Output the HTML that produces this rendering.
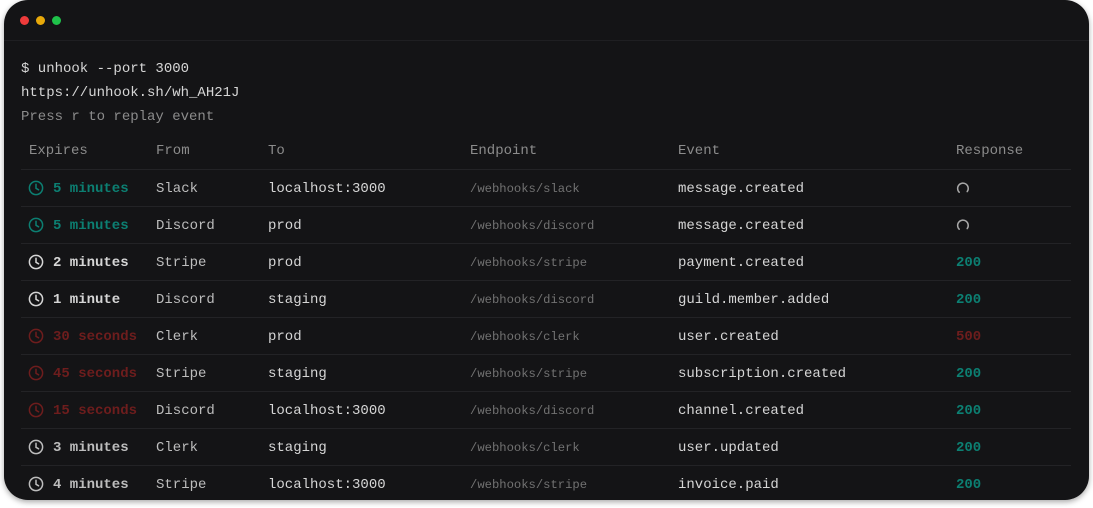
<!DOCTYPE html>
<html><head><style>
body{margin:0;width:1093px;height:508px;background:#fff;overflow:hidden;font-family:"Liberation Mono",monospace;}
.win{position:absolute;left:4px;top:0;width:1085px;height:500px;background:#141416;border-radius:24px;box-shadow:0 2px 6px rgba(0,0,0,.35);overflow:hidden;}
.dot{position:absolute;top:16px;width:9px;height:9px;border-radius:50%;}
.bar{position:absolute;left:0;right:0;top:40px;height:1px;background:#1f1f22;}
.t{position:absolute;font-size:14px;white-space:nowrap;line-height:16px;color:#d2d2d2;}
.ln{position:absolute;left:17px;width:1050px;height:1px;background:#232326;}
.ep{font-size:12.2px;color:#727272;}
.h{color:#8c8c8c;}
.b{font-weight:bold;}
.teal{color:#0c7f72;}
.red{color:#6e1d1d;}
.w{color:#d6d6d6;}
.g{color:#bdbdbd;}
svg{position:absolute;}
</style></head><body>
<div class="win">
<div class="dot" style="left:16px;background:#ee3b3b"></div>
<div class="dot" style="left:32px;background:#e8a90a"></div>
<div class="dot" style="left:48px;background:#1fc24a"></div>
<div class="bar"></div>
<div class="t w" style="left:17px;top:61px">$ unhook --port 3000</div>
<div class="t w" style="left:17px;top:85px">https://unhook.sh/wh_AH21J</div>
<div class="t h" style="left:17px;top:109px">Press r to replay event</div>
<div class="t h" style="left:25px;top:143px">Expires</div>
<div class="t h" style="left:152px;top:143px">From</div>
<div class="t h" style="left:264px;top:143px">To</div>
<div class="t h" style="left:466px;top:143px">Endpoint</div>
<div class="t h" style="left:674px;top:143px">Event</div>
<div class="t h" style="left:952px;top:143px">Response</div>
<div id="rows"></div>
</div>
<script>
var R=[
["teal","5 minutes","Slack","localhost:3000","/webhooks/slack","message.created","spin"],
["teal","5 minutes","Discord","prod","/webhooks/discord","message.created","spin"],
["w","2 minutes","Stripe","prod","/webhooks/stripe","payment.created","200"],
["w","1 minute","Discord","staging","/webhooks/discord","guild.member.added","200"],
["red","30 seconds","Clerk","prod","/webhooks/clerk","user.created","500"],
["red","45 seconds","Stripe","staging","/webhooks/stripe","subscription.created","200"],
["red","15 seconds","Discord","localhost:3000","/webhooks/discord","channel.created","200"],
["g","3 minutes","Clerk","staging","/webhooks/clerk","user.updated","200"],
["g","4 minutes","Stripe","localhost:3000","/webhooks/stripe","invoice.paid","200"]];
var col={teal:"#0c7f72",red:"#6e1d1d",w:"#d6d6d6",g:"#bdbdbd"};
var h="";
R.forEach(function(r,i){
 var ly=169+37*i, cy=ly+19;
 h+='<div class="ln" style="top:'+ly+'px"></div>';
 var c=col[r[0]];
 h+='<svg style="left:24px;top:'+(cy-8)+'px" width="16" height="16" viewBox="0 0 16 16"><circle cx="8" cy="8" r="6.6" fill="none" stroke="'+c+'" stroke-width="1.5"/><path d="M8 4.3V8.3L10.6 9.8" fill="none" stroke="'+c+'" stroke-width="1.5" stroke-linecap="round"/></svg>';
 h+='<div class="t b '+r[0]+'" style="left:49px;top:'+(cy-7)+'px">'+r[1]+'</div>';
 h+='<div class="t g" style="left:152px;top:'+(cy-7)+'px">'+r[2]+'</div>';
 h+='<div class="t w" style="left:264px;top:'+(cy-7)+'px">'+r[3]+'</div>';
 h+='<div class="t ep" style="left:466px;top:'+(cy-7)+'px">'+r[4]+'</div>';
 h+='<div class="t w" style="left:674px;top:'+(cy-7)+'px">'+r[5]+'</div>';
 if(r[6]=="spin") h+='<svg style="left:952px;top:'+(cy-7)+'px" width="14" height="14" viewBox="0 0 14 14"><path d="M3.2 11.2A5.3 5.3 0 1 1 11.2 10.6" fill="none" stroke="#a8a8a8" stroke-width="1.5" stroke-linecap="round"/></svg>';
 else h+='<div class="t b '+(r[6]=="500"?"red":"teal")+'" style="left:952px;top:'+(cy-7)+'px">'+r[6]+'</div>';
});
document.getElementById("rows").innerHTML=h;
</script>
</body></html>
